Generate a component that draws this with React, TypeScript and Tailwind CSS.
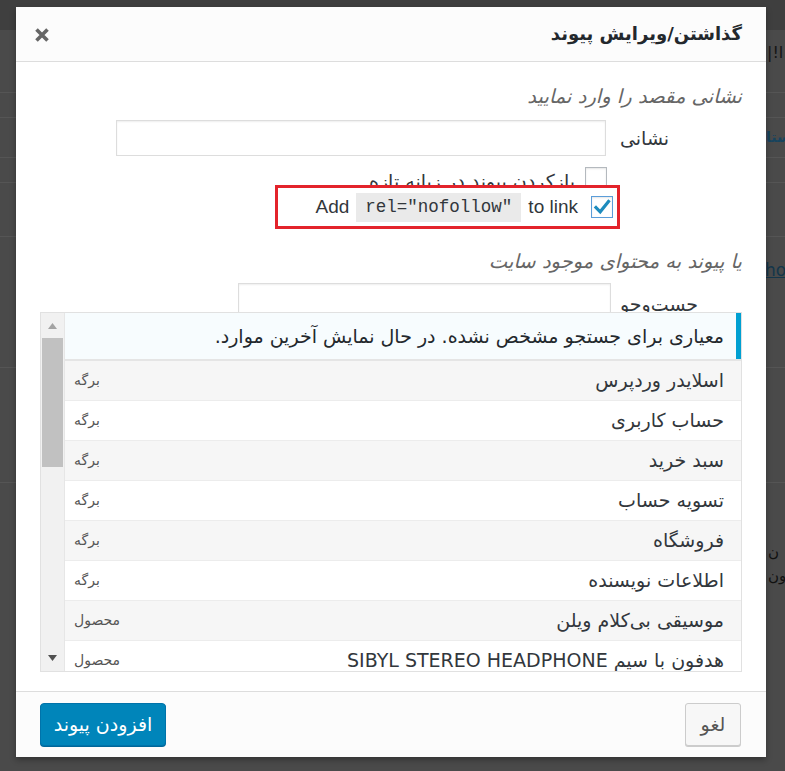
import React from "react";

const fa = "font-['DejaVu_Sans','Noto_Sans',sans-serif]";

function Checkbox({ checked }: { checked?: boolean }) {
  return (
    <span
      className={
        "flex h-[22px] w-[22px] shrink-0 items-center justify-center bg-white shadow-[inset_0_1px_2px_rgba(0,0,0,0.1)] " +
        (checked ? "border border-[#5b9dd9]" : "border border-[#b4b9be]")
      }
    >
      {checked && (
        <svg width="20" height="20" viewBox="0 0 20 20">
          <path d="M4 10.5 L8.2 14.8 L16.5 4.5" fill="none" stroke="#1e8cbe" strokeWidth="3.2" strokeLinecap="square" />
        </svg>
      )}
    </span>
  );
}

export default function App() {
  const rows = [
    { t: "اسلایدر وردپرس", k: "برگه" },
    { t: "حساب کاربری", k: "برگه" },
    { t: "سبد خرید", k: "برگه" },
    { t: "تسویه حساب", k: "برگه" },
    { t: "فروشگاه", k: "برگه" },
    { t: "اطلاعات نویسنده", k: "برگه" },
    { t: "موسیقی بی‌کلام ویلن", k: "محصول" },
    { t: "هدفون با سیم SIBYL STEREO HEADPHONE", k: "محصول" },
  ];

  return (
    <div className={"relative h-[771px] w-[785px] overflow-hidden bg-[#4a4a4a] " + fa}>
      {/* dimmed page behind the dialog */}
      <div className="flex h-full flex-col text-[16px]">
        <div className="h-[30px] bg-[#3f3f3f]" />
        <div className="h-[63px] whitespace-nowrap border-b border-[#555] pl-[767px] pt-[13px] leading-[20px] text-[#151515]">
          <span dir="ltr">|!ا</span>
        </div>
        <div className="h-[25px] border-b border-[#555]" />
        <div className="flex h-[40px] items-center whitespace-nowrap border-b border-[#555] pl-[766px] text-[14px] font-bold text-[#17445e]">
          ستا
        </div>
        <div className="h-[25px] border-b border-[#555]" />
        <div className="h-[54px] border-b border-[#555]" />
        <div className="h-[131px] whitespace-nowrap border-b border-[#555] pl-[765px] pt-[22px] text-[17px] leading-[22px] text-[#14364a]">
          <span className="underline" dir="ltr">
            ho
          </span>
        </div>
        <div className="h-[115px] border-b border-[#555]" />
        <div className="flex flex-col whitespace-nowrap pl-[768px] pt-[57px] text-[15px] leading-[24px] text-[#111]">
          <span>ن</span>
          <span>ون</span>
        </div>
      </div>

      {/* dialog */}
      <div
        dir="rtl"
        className="absolute left-[16px] top-[7px] flex h-[750px] w-[750px] flex-col bg-white shadow-[0_3px_6px_rgba(0,0,0,0.3)]"
      >
        {/* header */}
        <div className="flex h-[55px] shrink-0 items-center justify-between border-b border-[#ddd] bg-[#fcfcfc] pl-[18px] pr-[24px]">
          <h1 className="text-[18px] font-bold leading-[26px] text-[#23282d]">گذاشتن/ویرایش پیوند</h1>
          <svg width="16" height="16" viewBox="0 0 16 16" className="mt-[1px]">
            <path d="M2.5 2.5 L13.5 13.5 M13.5 2.5 L2.5 13.5" stroke="#666" strokeWidth="3.6" />
          </svg>
        </div>

        {/* body */}
        <div className="flex flex-1 flex-col px-[24px] pt-[23px]">
          <p className="text-[19.5px] italic leading-[24px] text-[#666]">نشانی مقصد را وارد نمایید</p>

          <div className="mt-[11px] flex h-[36px] items-center gap-[14px]">
            <span className="w-[122px] text-left text-[19px] text-[#32373c]">نشانی</span>
            <div className="h-[36px] w-[490px] border border-[#ddd] bg-white shadow-[inset_0_1px_2px_rgba(0,0,0,0.07)]" />
          </div>

          <div className="mt-[11px] flex h-[22px] items-start gap-[10px] pr-[135px]">
            <Checkbox />
            <span className="mt-[2px] whitespace-nowrap text-[19px] leading-[24px] text-[#32373c]">بازکردن پیوند در زبانه تازه</span>
          </div>

          <div className="relative z-10 -mt-[4px] flex pr-[122px]">
            <div className="flex h-[44px] w-[345px] items-center gap-[13px] border-[3px] border-[#e3232b] bg-white pr-[4px]">
              <Checkbox checked />
              <span dir="ltr" className="flex items-center gap-[7px] font-['Liberation_Sans',Arial,sans-serif] text-[19px] text-[#32373c]">
                <span>Add</span>
                <code className="flex h-[29px] items-center bg-[#eaeaea] px-[9px] font-['Liberation_Mono','DejaVu_Sans_Mono',monospace] text-[17.5px] text-[#32373c]">
                  rel="nofollow"
                </code>
                <span>to link</span>
              </span>
            </div>
          </div>

          <p className="mt-[21px] text-[19.5px] italic leading-[24px] text-[#666]">یا پیوند به محتوای موجود سایت</p>

          <div className="mt-[9px] flex h-[36px] items-center gap-[9px]">
            <span className="mt-[6px] w-[122px] text-left text-[19px] text-[#32373c]">جست‌وجو</span>
            <div className="h-[36px] w-[373px] border border-[#ddd] bg-white shadow-[inset_0_1px_2px_rgba(0,0,0,0.07)]" />
          </div>

          {/* results */}
          <div className="relative z-10 -mt-[7px] flex h-[360px] border border-[#e1e1e1] bg-white">
            <div className="flex flex-1 flex-col overflow-hidden">
              <div className="flex h-[46px] shrink-0 items-center whitespace-nowrap border-r-[5px] border-[#00a0d2] bg-[#f7fcfe] pr-[12px] text-[19px] text-[#23282d]">
                معیاری برای جستجو مشخص نشده. در حال نمایش آخرین موارد.
              </div>
              <div className="h-[2px] shrink-0 bg-[#e5e5e5]" />
              {rows.map((r, i) => (
                <div
                  key={i}
                  className={
                    "flex h-[40px] shrink-0 items-center justify-between border-b border-[#ececec] pl-[9px] pr-[17px] " +
                    (i % 2 === 0 ? "bg-[#f6f6f6]" : "bg-white")
                  }
                >
                  <span className="whitespace-nowrap text-[19px] text-[#32373c]">{r.t}</span>
                  <span className="text-[14px] text-[#555]">{r.k}</span>
                </div>
              ))}
            </div>
            {/* scrollbar */}
            <div className="flex w-[24px] shrink-0 flex-col items-center border-r border-[#e6e6e6] bg-[#f1f1f1]">
              <div className="flex h-[25px] w-full items-center justify-center">
                <svg width="9" height="6" viewBox="0 0 9 6">
                  <path d="M0 6 L4.5 0 L9 6 Z" fill="#a3a3a3" />
                </svg>
              </div>
              <div className="h-[129px] w-[21px] bg-[#c1c1c1]" />
              <div className="flex-1" />
              <div className="flex h-[26px] w-full items-center justify-center">
                <svg width="9" height="6" viewBox="0 0 9 6">
                  <path d="M0 0 L9 0 L4.5 6 Z" fill="#505050" />
                </svg>
              </div>
            </div>
          </div>
        </div>

        {/* footer */}
        <div className="flex h-[66px] shrink-0 items-start justify-between border-t border-[#ddd] bg-[#fcfcfc] pl-[24px] pr-[25px] pt-[11px]">
          <button className="flex h-[43px] w-[56px] items-center justify-center rounded-[3px] border border-[#ccc] bg-[#f7f7f7] text-[19px] text-[#555] shadow-[0_1px_0_#ccc]">
            لغو
          </button>
          <button className="flex h-[43px] w-[126px] items-center justify-center rounded-[4px] border border-[#0073aa] bg-[#0085ba] text-[19px] text-white shadow-[0_1px_0_#006799]">
            افزودن پیوند
          </button>
        </div>
      </div>
    </div>
  );
}
